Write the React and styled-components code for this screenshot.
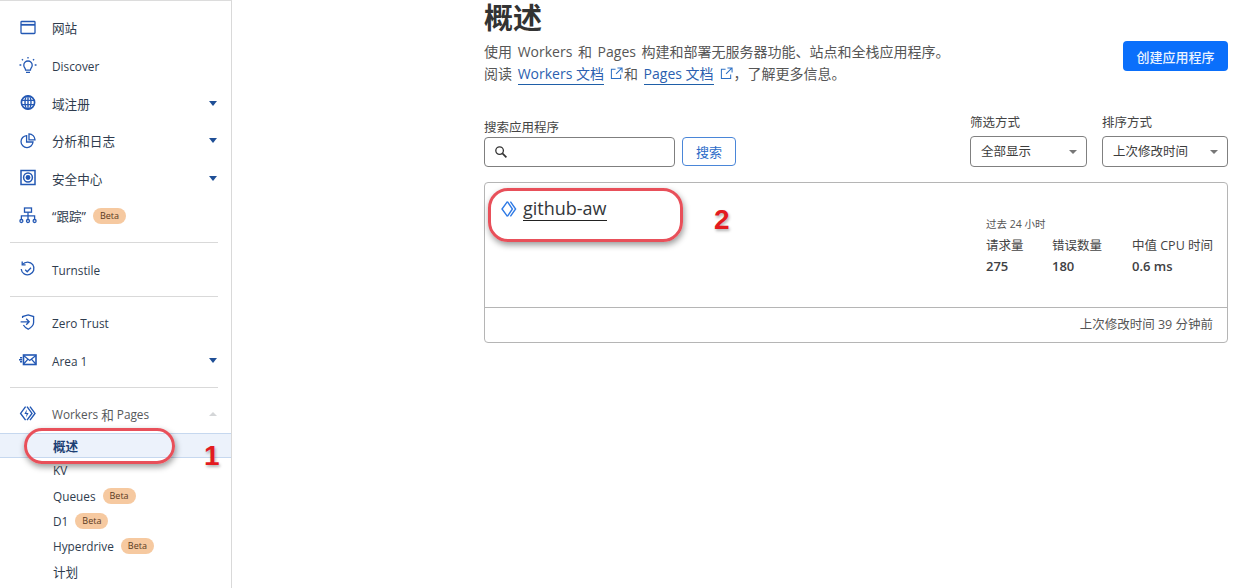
import React from 'react';
import styled, { createGlobalStyle } from 'styled-components';

const FONT = '"Open Sans", "Noto Sans CJK SC", sans-serif';
const ICON_BLUE = '#2358b4';

const GlobalStyle = createGlobalStyle`
  html, body {
    margin: 0;
    padding: 0;
    background: #fff;
    overflow: hidden;
  }
  body {
    font-family: ${FONT};
    color: #36393a;
  }
`;

const Page = styled.div`
  position: relative;
  display: flex;
  width: 1251px;
  height: 588px;
  overflow: hidden;
`;

const Sidebar = styled.nav`
  flex: none;
  width: 232px;
  height: 588px;
  box-sizing: border-box;
  border-right: 1px solid #d9d9d9;
  border-top: 1px solid #dcdcdc;
  padding-top: 8.2px;
  overflow: hidden;
`;

const Item = styled.div`
  display: flex;
  align-items: center;
  height: ${p => p.$h || 37.6}px;
  padding: 0 13px 0 18px;
  font-size: 12.6px;
  color: ${p => p.$muted ? '#55585a' : '#2f3c4e'};
`;

const IconSlot = styled.span`
  flex: none;
  display: flex;
  width: 20px;
  height: 20px;
  margin-right: 14px;
  color: ${ICON_BLUE};
`;

const Label = styled.span`
  flex: 1;
  display: flex;
  align-items: center;
  white-space: pre;
`;

const Latin = styled.span`
  font-size: 11.8px;
`;

const Beta = styled.span`
  margin-left: 7px;
  padding: 0 7px;
  height: 16px;
  line-height: 16px;
  border-radius: 8px;
  background: #f6c9a0;
  color: #5a3a22;
  font-size: 9px;
`;

const Caret = styled.span`
  width: 0;
  height: 0;
  margin-right: 1px;
  border-left: 4px solid transparent;
  border-right: 4px solid transparent;
  ${p => p.$up
    ? 'border-bottom: 4px solid #d4d6d8;'
    : 'border-top: 5px solid #1f4f96;'}
`;

const Divider = styled.hr`
  margin: 7.5px 13px 7.5px 10px;
  border: 0;
  border-top: 1px solid #d9d9d9;
`;

const SubItem = styled.div`
  display: flex;
  align-items: center;
  box-sizing: border-box;
  height: ${p => p.$active ? 25 : 25.2}px;
  padding-left: 53px;
  font-size: 12.6px;
  color: #2f3c4e;
  ${p => p.$active && `
    background: #ecf2fb;
    border-top: 1px solid #c6d8ef;
    border-bottom: 1px solid #c6d8ef;
    font-weight: 600;
    color: #1d3f73;
  `}
`;

const Main = styled.main`
  flex: 1;
  min-width: 0;
  padding: 0 23px 0 252px;
`;

const Head = styled.header`
  display: flex;
  justify-content: space-between;
  align-items: flex-start;
  box-sizing: border-box;
  height: 85px;
  padding-top: 1px;
`;

const Title = styled.h1`
  margin: 0 0 6px;
  font-size: 29px;
  line-height: 34px;
  font-weight: 700;
  color: #333;
`;

const Desc = styled.p`
  margin: 0;
  font-size: 14px;
  line-height: 22px;
  word-spacing: 2px;
  color: #565656;
`;

const DocLink = styled.a`
  color: #2b5fb0;
  border-bottom: 1px solid #1f5fa8;
  padding-bottom: 1px;
  word-spacing: 0;
`;

const ExtIcon = styled.svg`
  width: 13px;
  height: 13px;
  margin: 0 1px 0 6px;
  vertical-align: -1px;
  color: #2b6fc4;
`;

const CreateButton = styled.button`
  width: 105px;
  height: 30px;
  margin-top: 40px;
  border: 0;
  border-radius: 4px;
  background: #0a6ffb;
  color: #eaf3ff;
  font: 500 13px ${FONT};
`;

const Controls = styled.section`
  display: flex;
  justify-content: space-between;
  align-items: flex-end;
  height: 82px;
`;

const Field = styled.div`
  display: flex;
  flex-direction: column;
  gap: ${p => p.$gap || 1}px;
`;

const FieldLabel = styled.label`
  font-size: 12.5px;
  line-height: 17px;
  color: #444;
`;

const SearchRow = styled.div`
  display: flex;
  gap: 7px;
`;

const SearchBox = styled.div`
  display: flex;
  align-items: center;
  box-sizing: border-box;
  width: 191px;
  height: 30px;
  padding-left: 9px;
  border: 1px solid #7f7f7f;
  border-radius: 4px;
`;

const SearchButton = styled.button`
  width: 54px;
  height: 29px;
  border: 1px solid #4a86d8;
  border-radius: 4px;
  background: #fff;
  color: #2b6cc8;
  font: 13px ${FONT};
`;

const Filters = styled.div`
  display: flex;
  gap: 15px;
`;

const Select = styled.div`
  display: flex;
  align-items: center;
  justify-content: space-between;
  box-sizing: border-box;
  width: ${p => p.$w}px;
  height: 31px;
  padding: 0 9px 2px 10px;
  border: 1px solid #808080;
  border-radius: 4px;
  font-size: 12.5px;
  color: #3c3c3c;
`;

const SelectCaret = styled.span`
  width: 0;
  height: 0;
  margin-top: 2px;
  border-left: 4px solid transparent;
  border-right: 4px solid transparent;
  border-top: 4px solid #777;
`;

const Card = styled.article`
  margin-top: 15px;
  box-sizing: border-box;
  height: 161px;
  border: 1px solid #b5b5b5;
  border-radius: 4px;
  display: flex;
  flex-direction: column;
`;

const CardBody = styled.div`
  flex: 1;
  display: flex;
  justify-content: space-between;
  padding: 0 14px 0 16px;
`;

const AppName = styled.div`
  display: flex;
  align-items: center;
  gap: 6px;
  height: 24px;
  margin-top: 14px;
`;

const AppLink = styled.a`
  font-size: 18px;
  line-height: 23px;
  font-weight: 500;
  color: #33373a;
  border-bottom: 1px solid #222;
`;

const Stats = styled.div`
  margin-top: 34px;
`;

const StatsCaption = styled.div`
  font-size: 10.5px;
  line-height: 14px;
  color: #555;
`;

const StatsGrid = styled.div`
  display: grid;
  grid-template-columns: 66px 80px auto;
  margin-top: 4px;
  font-size: 12.5px;
  line-height: 21px;
  color: #444;
`;

const StatValue = styled.b`
  font-size: 13px;
  font-weight: 600;
  color: #3f4144;
`;

const CardFooter = styled.footer`
  height: 34px;
  border-top: 1px solid #b5b5b5;
  padding-right: 14px;
  text-align: right;
  font-size: 12.5px;
  line-height: 33px;
  color: #555;
`;

const Oval = styled.div`
  position: absolute;
  left: ${p => p.$x}px;
  top: ${p => p.$y}px;
  width: ${p => p.$w}px;
  height: ${p => p.$h}px;
  box-sizing: border-box;
  border: 3px solid #e8505a;
  border-radius: ${p => p.$r}px;
  box-shadow: 1px 3px 6px rgba(0, 0, 0, 0.4);
  pointer-events: none;
`;

const Mark = styled.span`
  position: absolute;
  left: ${p => p.$x}px;
  top: ${p => p.$y}px;
  font: 700 28px/30px "Liberation Sans", sans-serif;
  color: #e31b1f;
  text-shadow: 1px 2px 3px rgba(0, 0, 0, 0.3);
`;

const Glyph = ({ children }) => (
  <svg width="20" height="20" viewBox="0 0 20 20" fill="none" stroke="currentColor" strokeWidth="1.3">
    {children}
  </svg>
);

const WebIcon = () => (
  <Glyph>
    <rect x="3" y="3.5" width="14" height="12" rx="0.8" />
    <path d="M3 6.8h14" strokeWidth="1.8" />
  </Glyph>
);

const BulbIcon = () => (
  <Glyph>
    <path d="M7.6 14.2c0-2-1.8-2.6-1.8-5a4.2 4.2 0 0 1 8.4 0c0 2.4-1.8 3-1.8 5z" />
    <path d="M8 16.4h4M10 1v1.6M3.9 3.2 5 4.3M16.1 3.2 15 4.3M1.5 9h1.8M16.7 9h1.8" />
  </Glyph>
);

const GlobeIcon = () => (
  <Glyph>
    <circle cx="10" cy="9.5" r="6.6" strokeWidth="1.7" />
    <ellipse cx="10" cy="9.5" rx="3" ry="6.6" strokeWidth="1.4" />
    <path d="M3.6 7.4h12.8M3.6 11.6h12.8M10 3v13" strokeWidth="1.4" />
  </Glyph>
);

const PieIcon = () => (
  <Glyph>
    <path d="M8.6 4.6a6 6 0 1 0 6.4 6.4H8.6z" />
    <path d="M11 2.8a6.2 6.2 0 0 1 6 6h-6z" />
  </Glyph>
);

const SafeIcon = () => (
  <Glyph>
    <rect x="3" y="2.5" width="14" height="14" strokeWidth="1.5" />
    <circle cx="10" cy="9.5" r="4.4" strokeWidth="1.5" />
    <circle cx="10" cy="9.5" r="1.8" fill="currentColor" />
  </Glyph>
);

const TreeIcon = () => (
  <Glyph>
    <rect x="6.5" y="2" width="7" height="4.2" />
    <path d="M10 6.2v3.6M3.4 13v-3.2h13.2V13M10 9.8V13" />
    <circle cx="3.4" cy="15" r="1.5" />
    <circle cx="10" cy="15" r="1.5" />
    <circle cx="16.6" cy="15" r="1.5" />
  </Glyph>
);

const TurnstileIcon = () => (
  <Glyph>
    <path d="M4.6 4.4a6.4 6.4 0 1 1-1.4 4.6" />
    <path d="M4.2 1.4v3.4h3.4" />
    <path d="m7.2 9.8 2 2 3.8-4" />
  </Glyph>
);

const ShieldIcon = () => (
  <Glyph>
    <path d="M4.6 5V3.6L10.2 2l5.4 1.6v6c0 3-2.4 5-5.4 6.6-2.2-1.1-3.8-2.4-4.8-4.2" />
    <path d="M2.6 8.8h8.4M8.2 5.8l3 3-3 3" />
  </Glyph>
);

const MailIcon = () => (
  <Glyph>
    <rect x="5.5" y="4" width="12.5" height="9.5" strokeWidth="1.6" />
    <path d="m5.5 4.4 6.2 5 6.2-5M5.6 13l4.2-4.6M17.8 13l-4.2-4.6" />
    <path d="M2 6.8h2.2M1 8.8h3.2M2 10.8h2.2" strokeWidth="1.4" />
  </Glyph>
);

const WorkersIcon = () => (
  <svg width="20" height="20" viewBox="0 0 20 20" fill="none" stroke="currentColor" strokeWidth="1.4">
    <path d="M7.6 2.6 2.6 9.4l5 6.8" />
    <path d="m9 2.6 5 6.8-5 6.8" />
    <path d="m12 2.6 5 6.8-5 6.8" />
    <path d="M8.8 5.4 6.4 10h2.2l-.6 3.6 2.6-4.6H8.4z" fill="currentColor" stroke="none" />
  </svg>
);

const AppIcon = () => (
  <svg width="16" height="18" viewBox="0 0 16 18" fill="none" stroke="#2f7ae5" strokeWidth="1.4">
    <path d="M6.4 1.6 1 9l5.4 7.4" />
    <path d="M6.4 1.6 11.4 9l-5 7.4" />
    <path d="M9.4 1.6 14.6 9l-5.2 7.4" />
  </svg>
);

const SearchIcon = () => (
  <svg width="14" height="14" viewBox="0 0 14 14" fill="none" stroke="#333" strokeWidth="1.3">
    <circle cx="5.6" cy="5.6" r="3.8" />
    <path d="m8.4 8.4 4 4" strokeWidth="1.7" />
  </svg>
);

const External = () => (
  <ExtIcon viewBox="0 0 14 14" fill="none" stroke="currentColor" strokeWidth="1.1">
    <path d="M6 2.5H1.5v10h10V8M8 1h5v5M13 1 6.5 7.5" />
  </ExtIcon>
);

const NavItem = ({ icon, caret, beta, children, muted, h }) => (
  <Item $muted={muted} $h={h}>
    <IconSlot>{icon}</IconSlot>
    <Label>{children}{beta && <Beta>Beta</Beta>}</Label>
    {caret && <Caret $up={caret === 'up'} />}
  </Item>
);

const App = () => (
  <Page>
    <GlobalStyle />
    <Sidebar>
      <NavItem icon={<WebIcon />}>网站</NavItem>
      <NavItem icon={<BulbIcon />}><Latin>Discover</Latin></NavItem>
      <NavItem icon={<GlobeIcon />} caret="down">域注册</NavItem>
      <NavItem icon={<PieIcon />} caret="down">分析和日志</NavItem>
      <NavItem icon={<SafeIcon />} caret="down">安全中心</NavItem>
      <NavItem icon={<TreeIcon />} beta>“跟踪”</NavItem>
      <Divider />
      <NavItem icon={<TurnstileIcon />}><Latin>Turnstile</Latin></NavItem>
      <Divider />
      <NavItem icon={<ShieldIcon />}><Latin>Zero Trust</Latin></NavItem>
      <NavItem icon={<MailIcon />} caret="down"><Latin>Area 1</Latin></NavItem>
      <Divider />
      <NavItem icon={<WorkersIcon />} caret="up" muted h={37.3}>
        <Latin>Workers </Latin>和<Latin> Pages</Latin>
      </NavItem>
      <SubItem $active>概述</SubItem>
      <SubItem><Latin>KV</Latin></SubItem>
      <SubItem><Latin>Queues</Latin><Beta>Beta</Beta></SubItem>
      <SubItem><Latin>D1</Latin><Beta>Beta</Beta></SubItem>
      <SubItem><Latin>Hyperdrive</Latin><Beta>Beta</Beta></SubItem>
      <SubItem>计划</SubItem>
    </Sidebar>

    <Main>
      <Head>
        <div>
          <Title>概述</Title>
          <Desc>使用 Workers 和 Pages 构建和部署无服务器功能、站点和全栈应用程序。</Desc>
          <Desc>
            阅读 <DocLink>Workers 文档</DocLink><External />和 <DocLink>Pages 文档</DocLink><External />，了解更多信息。
          </Desc>
        </div>
        <CreateButton>创建应用程序</CreateButton>
      </Head>

      <Controls>
        <Field>
          <FieldLabel>搜索应用程序</FieldLabel>
          <SearchRow>
            <SearchBox><SearchIcon /></SearchBox>
            <SearchButton>搜索</SearchButton>
          </SearchRow>
        </Field>
        <Filters>
          <Field $gap={5}>
            <FieldLabel>筛选方式</FieldLabel>
            <Select $w={117}>全部显示<SelectCaret /></Select>
          </Field>
          <Field $gap={5}>
            <FieldLabel>排序方式</FieldLabel>
            <Select $w={126}>上次修改时间<SelectCaret /></Select>
          </Field>
        </Filters>
      </Controls>

      <Card>
        <CardBody>
          <AppName>
            <AppIcon />
            <AppLink>github-aw</AppLink>
          </AppName>
          <Stats>
            <StatsCaption>过去 24 小时</StatsCaption>
            <StatsGrid>
              <span>请求量</span>
              <span>错误数量</span>
              <span>中值 CPU 时间</span>
              <StatValue>275</StatValue>
              <StatValue>180</StatValue>
              <StatValue>0.6 ms</StatValue>
            </StatsGrid>
          </Stats>
        </CardBody>
        <CardFooter>上次修改时间 39 分钟前</CardFooter>
      </Card>
    </Main>

    <Oval $x={24} $y={428} $w={151} $h={36} $r={18} />
    <Mark $x={204} $y={441}>1</Mark>
    <Oval $x={488} $y={188} $w={195} $h={54} $r={20} />
    <Mark $x={714} $y={205}>2</Mark>
  </Page>
);

export default App;
